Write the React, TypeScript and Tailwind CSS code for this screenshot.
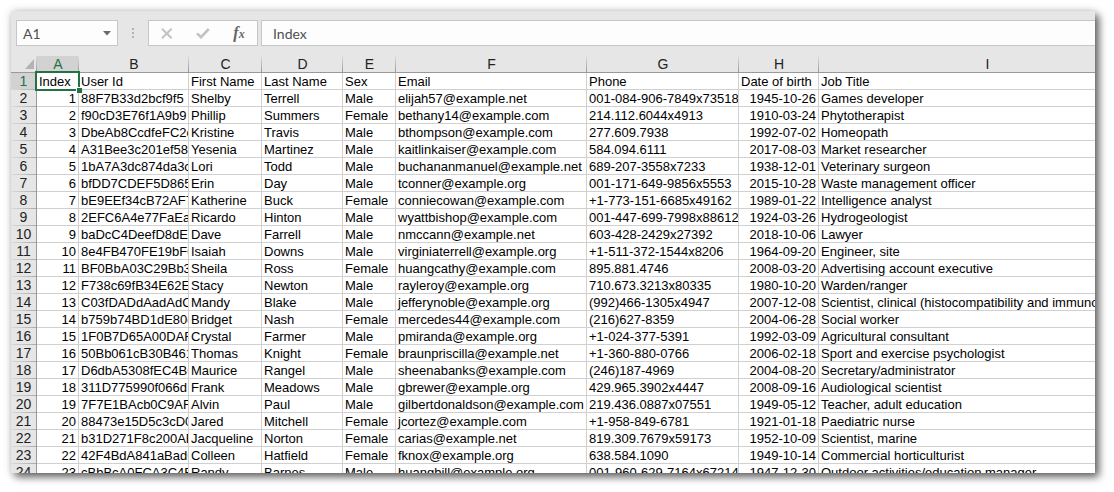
import clsx from "clsx"

const columns = [
  { letter: "A", width: "w-[42px]" },
  { letter: "B", width: "w-[110px]" },
  { letter: "C", width: "w-[73px]" },
  { letter: "D", width: "w-[81px]" },
  { letter: "E", width: "w-[53px]" },
  { letter: "F", width: "w-[191px]" },
  { letter: "G", width: "w-[152px]" },
  { letter: "H", width: "w-[80px]" },
  { letter: "I", width: "w-[337px]" },
]

const rows: string[][] = [
  ["Index", "User Id", "First Name", "Last Name", "Sex", "Email", "Phone", "Date of birth", "Job Title"],
  ["1", "88F7B33d2bcf9f5", "Shelby", "Terrell", "Male", "elijah57@example.net", "001-084-906-7849x73518", "1945-10-26", "Games developer"],
  ["2", "f90cD3E76f1A9b9", "Phillip", "Summers", "Female", "bethany14@example.com", "214.112.6044x4913", "1910-03-24", "Phytotherapist"],
  ["3", "DbeAb8CcdfeFC2c", "Kristine", "Travis", "Male", "bthompson@example.com", "277.609.7938", "1992-07-02", "Homeopath"],
  ["4", "A31Bee3c201ef58", "Yesenia", "Martinez", "Male", "kaitlinkaiser@example.com", "584.094.6111", "2017-08-03", "Market researcher"],
  ["5", "1bA7A3dc874da3c", "Lori", "Todd", "Male", "buchananmanuel@example.net", "689-207-3558x7233", "1938-12-01", "Veterinary surgeon"],
  ["6", "bfDD7CDEF5D865B", "Erin", "Day", "Male", "tconner@example.org", "001-171-649-9856x5553", "2015-10-28", "Waste management officer"],
  ["7", "bE9EEf34cB72AF7", "Katherine", "Buck", "Female", "conniecowan@example.com", "+1-773-151-6685x49162", "1989-01-22", "Intelligence analyst"],
  ["8", "2EFC6A4e77FaEaC", "Ricardo", "Hinton", "Male", "wyattbishop@example.com", "001-447-699-7998x88612", "1924-03-26", "Hydrogeologist"],
  ["9", "baDcC4DeefD8dEB", "Dave", "Farrell", "Male", "nmccann@example.net", "603-428-2429x27392", "2018-10-06", "Lawyer"],
  ["10", "8e4FB470FE19bF0", "Isaiah", "Downs", "Male", "virginiaterrell@example.org", "+1-511-372-1544x8206", "1964-09-20", "Engineer, site"],
  ["11", "BF0BbA03C29Bb3b", "Sheila", "Ross", "Female", "huangcathy@example.com", "895.881.4746", "2008-03-20", "Advertising account executive"],
  ["12", "F738c69fB34E62E", "Stacy", "Newton", "Male", "rayleroy@example.org", "710.673.3213x80335", "1980-10-20", "Warden/ranger"],
  ["13", "C03fDADdAadAdCe", "Mandy", "Blake", "Male", "jefferynoble@example.org", "(992)466-1305x4947", "2007-12-08", "Scientist, clinical (histocompatibility and immunogenetics)"],
  ["14", "b759b74BD1dE80d", "Bridget", "Nash", "Female", "mercedes44@example.com", "(216)627-8359", "2004-06-28", "Social worker"],
  ["15", "1F0B7D65A00DAF9", "Crystal", "Farmer", "Male", "pmiranda@example.org", "+1-024-377-5391", "1992-03-09", "Agricultural consultant"],
  ["16", "50Bb061cB30B461", "Thomas", "Knight", "Female", "braunpriscilla@example.net", "+1-360-880-0766", "2006-02-18", "Sport and exercise psychologist"],
  ["17", "D6dbA5308fEC4BC", "Maurice", "Rangel", "Male", "sheenabanks@example.com", "(246)187-4969", "2004-08-20", "Secretary/administrator"],
  ["18", "311D775990f066d", "Frank", "Meadows", "Male", "gbrewer@example.org", "429.965.3902x4447", "2008-09-16", "Audiological scientist"],
  ["19", "7F7E1BAcb0C9AFf", "Alvin", "Paul", "Male", "gilbertdonaldson@example.com", "219.436.0887x07551", "1949-05-12", "Teacher, adult education"],
  ["20", "88473e15D5c3cD0", "Jared", "Mitchell", "Female", "jcortez@example.com", "+1-958-849-6781", "1921-01-18", "Paediatric nurse"],
  ["21", "b31D271F8c200AB", "Jacqueline", "Norton", "Female", "carias@example.net", "819.309.7679x59173", "1952-10-09", "Scientist, marine"],
  ["22", "42F4BdA841aBadC", "Colleen", "Hatfield", "Female", "fknox@example.org", "638.584.1090", "1949-10-14", "Commercial horticulturist"],
  ["23", "cBbBcA0FCA3C4Bc", "Randy", "Barnes", "Male", "huangbill@example.org", "001-960-629-7164x67214", "1947-12-30", "Outdoor activities/education manager"],
]

function FormulaBar() {
  return (
    <div className="flex items-center pl-[5px] pt-[9px] pb-[10px] font-['Lato',sans-serif] text-sm text-[#505050]">
      <div className="flex h-[26px] w-[102px] shrink-0 items-center border border-[#c6c6c6] bg-[#fdfdfd]">
        <input aria-label="Name box" defaultValue="A1" className="h-full w-full min-w-0 bg-transparent pl-1.5 outline-none" />
        <button aria-label="Show names" className="flex h-full w-5 shrink-0 items-center justify-center">
          <svg width="8" height="5" viewBox="0 0 8 5" className="fill-[#6a6a6a]">
            <path d="M0 0h8L4 4.5z" />
          </svg>
        </button>
      </div>
      <div className="flex w-[30px] shrink-0 flex-col items-center gap-0.5">
        <span className="size-0.5 bg-[#b4b4b4]" />
        <span className="size-0.5 bg-[#b4b4b4]" />
        <span className="size-0.5 bg-[#b4b4b4]" />
      </div>
      <div className="mr-[3px] flex h-[26px] w-[110px] shrink-0 items-center border border-[#c6c6c6] bg-[#fdfdfd]">
        <button aria-label="Cancel" className="flex flex-1 justify-center">
          <svg width="12" height="11" viewBox="0 0 12 11" fill="none" stroke="#c3c3c3" strokeWidth="2">
            <path d="M1 .8l9.6 9.4M10.6 .8L1 10.2" />
          </svg>
        </button>
        <button aria-label="Enter" className="flex flex-1 justify-center">
          <svg width="14" height="11" viewBox="0 0 14 11" fill="none" stroke="#c3c3c3" strokeWidth="2.6">
            <path d="M1 5.4l4 3.8L12.8 1" />
          </svg>
        </button>
        <button
          aria-label="Insert function"
          className="flex flex-1 items-baseline justify-center font-['Liberation_Serif',serif] leading-4 font-bold text-[#666] italic"
        >
          <span className="text-base leading-4">f</span>
          <span className="text-xs leading-4">x</span>
        </button>
      </div>
      <input
        aria-label="Formula bar"
        defaultValue="Index"
        className="h-[26px] min-w-0 flex-1 border border-r-0 border-[#c6c6c6] bg-[#fdfdfd] pl-[11px] outline-none"
      />
    </div>
  )
}

function Sheet() {
  return (
    <table className="w-[1145px] table-fixed border-separate border-spacing-0 text-[13px] leading-[15px] whitespace-nowrap">
      <colgroup>
        <col className="w-[26px]" />
        {columns.map((c) => (
          <col key={c.letter} className={c.width} />
        ))}
      </colgroup>
      <thead className="text-sm leading-4">
        <tr>
          <td className="border-b border-[#999] bg-[linear-gradient(to_bottom,#dcdcdc,#999)] bg-[length:1px_100%] bg-right bg-no-repeat p-0 pr-[3px]">
            <svg width="9" height="10" viewBox="0 0 9 10" className="ml-auto block fill-[#b4b4b4]">
              <path d="M9 0v10H0z" />
            </svg>
          </td>
          {columns.map((c, i) => (
            <th
              key={c.letter}
              scope="col"
              className={clsx(
                "border-b border-[#999] bg-[linear-gradient(to_bottom,#dcdcdc,#999)] bg-[length:1px_100%] bg-right bg-no-repeat p-0 font-normal",
                i === 0 ? "bg-[#d2d2d2] text-[#217346]" : "text-[#222]"
              )}
            >
              {c.letter}
            </th>
          ))}
        </tr>
      </thead>
      <tbody>
        {rows.map((row, r) => (
          <tr key={r}>
            <th
              scope="row"
              className={clsx(
                "border-r border-[#999] bg-[linear-gradient(to_right,#dcdcdc,#aaa)] bg-[length:100%_1px] bg-bottom bg-no-repeat px-0 py-px text-sm leading-[15px] font-normal",
                r === 0 ? "bg-[#d2d2d2] text-[#217346]" : "text-[#222]"
              )}
            >
              {r + 1}
            </th>
            {row.map((value, i) => {
              const selected = r === 0 && i === 0
              return (
                <td
                  key={i}
                  className={clsx(
                    "border-r border-b border-[#d0d0d0] bg-white px-0.5 pt-px pb-0 text-black",
                    selected ? "relative" : "overflow-hidden",
                    r > 0 && (i === 0 || i === 7) && "text-right"
                  )}
                >
                  {value}
                  {selected && (
                    <span className="absolute -inset-0.5 z-10 border-2 border-[#217346]">
                      <span className="absolute -right-[4px] -bottom-[4px] box-content size-[5px] border-t border-l border-white bg-[#217346]" />
                    </span>
                  )}
                </td>
              )
            })}
          </tr>
        ))}
      </tbody>
    </table>
  )
}

export default function App() {
  return (
    <div className="h-screen overflow-hidden bg-white pt-[11px] pr-[19px] pb-[19px] pl-[11px] font-['Liberation_Sans',Arial,sans-serif]">
      <main className="h-full overflow-hidden bg-[#e6e6e6] shadow-[4px_4px_8px_rgba(0,0,0,0.6),0_0_8px_rgba(0,0,0,0.15)]">
        <FormulaBar />
        <Sheet />
      </main>
    </div>
  )
}
